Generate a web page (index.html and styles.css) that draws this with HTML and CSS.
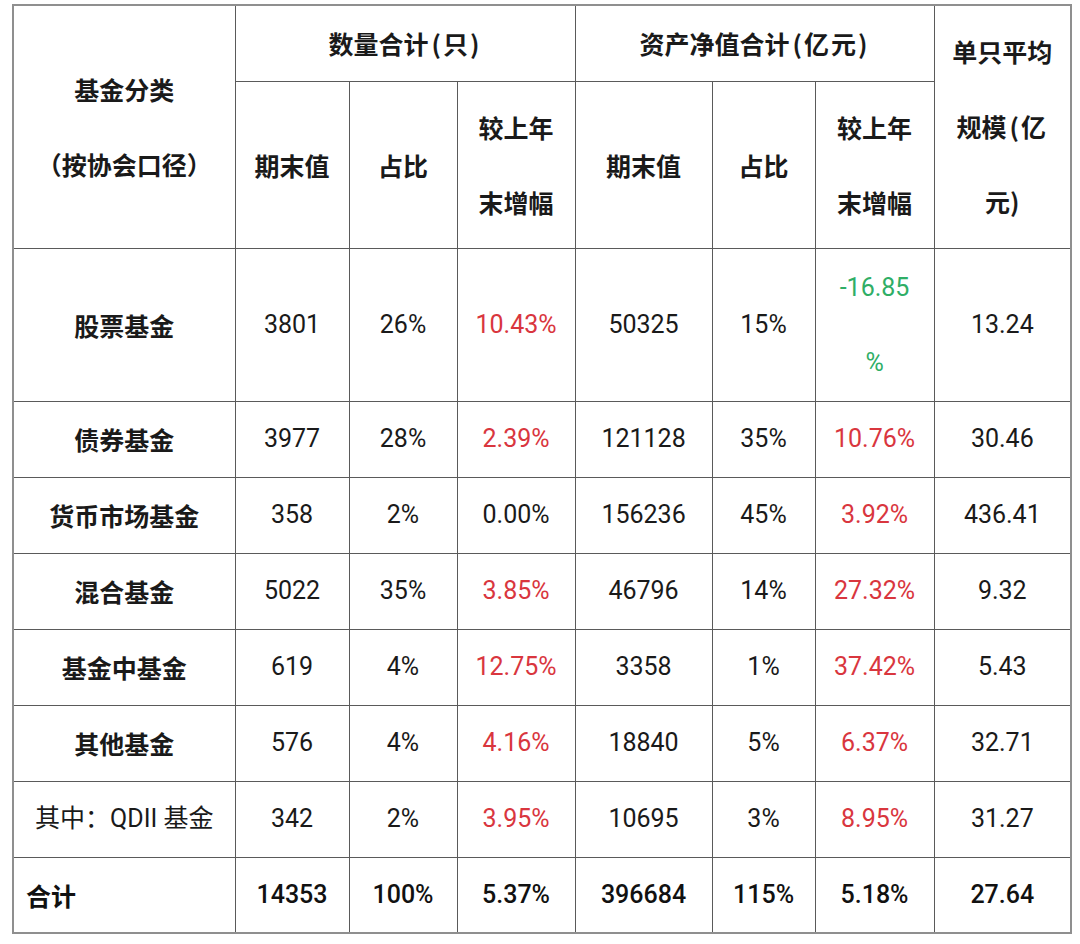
FILE: index.html
```html
<!DOCTYPE html>
<html lang="zh-CN">
<head>
<meta charset="utf-8">
<link rel="stylesheet" href="styles.css">
</head>
<body>
<table class="fund">
  <colgroup>
    <col class="c-name"><col class="c1"><col class="c2"><col class="c3"><col class="c4"><col class="c5"><col class="c6"><col class="c7">
  </colgroup>
  <thead>
    <tr class="h1">
      <th rowspan="2" class="ml">基金分类<br>（按协会口径）</th>
      <th colspan="3">数量合计<span class="par">(只)</span></th>
      <th colspan="3">资产净值合计<span class="par">(亿元)</span></th>
      <th rowspan="2" class="ml">单只平均<br>规模<span class="par">(亿</span><br>元)</th>
    </tr>
    <tr class="h2">
      <th>期末值</th>
      <th>占比</th>
      <th class="ml">较上年<br>末增幅</th>
      <th>期末值</th>
      <th>占比</th>
      <th class="ml">较上年<br>末增幅</th>
    </tr>
  </thead>
  <tbody>
    <tr class="r-tall">
      <td class="name">股票基金</td><td>3801</td><td>26%</td><td class="up">10.43%</td><td>50325</td><td>15%</td><td class="down ml">-16.85<br>%</td><td>13.24</td>
    </tr>
    <tr class="r">
      <td class="name">债券基金</td><td>3977</td><td>28%</td><td class="up">2.39%</td><td>121128</td><td>35%</td><td class="up">10.76%</td><td>30.46</td>
    </tr>
    <tr class="r">
      <td class="name">货币市场基金</td><td>358</td><td>2%</td><td>0.00%</td><td>156236</td><td>45%</td><td class="up">3.92%</td><td>436.41</td>
    </tr>
    <tr class="r">
      <td class="name">混合基金</td><td>5022</td><td>35%</td><td class="up">3.85%</td><td>46796</td><td>14%</td><td class="up">27.32%</td><td>9.32</td>
    </tr>
    <tr class="r">
      <td class="name">基金中基金</td><td>619</td><td>4%</td><td class="up">12.75%</td><td>3358</td><td>1%</td><td class="up">37.42%</td><td>5.43</td>
    </tr>
    <tr class="r">
      <td class="name">其他基金</td><td>576</td><td>4%</td><td class="up">4.16%</td><td>18840</td><td>5%</td><td class="up">6.37%</td><td>32.71</td>
    </tr>
    <tr class="r">
      <td class="sub">其中：QDII 基金</td><td>342</td><td>2%</td><td class="up">3.95%</td><td>10695</td><td>3%</td><td class="up">8.95%</td><td>31.27</td>
    </tr>
    <tr class="r total">
      <td class="name left">合计</td><td>14353</td><td>100%</td><td>5.37%</td><td>396684</td><td>115%</td><td>5.18%</td><td>27.64</td>
    </tr>
  </tbody>
</table>
</body>
</html>
```

FILE: styles.css
```css
html, body {
  margin: 0;
  padding: 0;
  background: #ffffff;
}

body {
  padding: 4px 0 0 12px;
  font-family: Roboto, "Noto Sans CJK SC", sans-serif;
  color: #1a1a1a;
}

.fund {
  border-collapse: collapse;
  table-layout: fixed;
  width: 1059px;
  border: 2px solid #8f8f8f;
}

.c-name { width: 222px; }
.c1 { width: 114px; }
.c2 { width: 108px; }
.c3 { width: 118px; }
.c4 { width: 137px; }
.c5 { width: 103px; }
.c6 { width: 119px; }
.c7 { width: 137px; }

.fund th,
.fund td {
  border: 1px solid #5a5a5a;
  padding: 0;
  text-align: center;
  vertical-align: middle;
  line-height: 30px;
}

.fund th {
  font-family: "Noto Sans CJK SC", sans-serif;
  font-size: 25px;
  font-weight: 700;
  color: #1a1a1a;
}

.par {
  padding-left: 3px;
  letter-spacing: 2px;
}

.fund .ml {
  line-height: 75px;
}

.h1 { height: 76px; }
.h2 { height: 167px; }
.r-tall { height: 153px; }
.r { height: 76px; }

.fund td {
  font-size: 25px;
  font-weight: 400;
}

.fund td.name {
  font-family: "Noto Sans CJK SC", sans-serif;
  font-weight: 700;
  font-size: 25px;
}

.fund td.sub {
  font-family: Roboto, "Noto Sans CJK SC", sans-serif;
  font-size: 25px;
  font-weight: 400;
}

.fund td.left {
  text-align: left;
  padding-left: 12px;
}

.total td {
  font-weight: 500;
  color: #111;
}

.up { color: #d9363e; }
.down { color: #2fae66; }
```
